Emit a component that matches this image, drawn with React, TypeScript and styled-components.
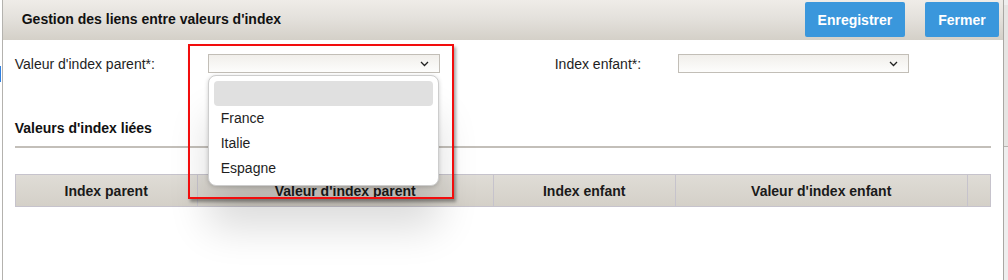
import styled, { createGlobalStyle } from 'styled-components'
import { FC } from 'react'

const GlobalStyle = createGlobalStyle`
	html, body {
		margin: 0;
		padding: 0;
		background: #ffffff;
		font-family: 'Liberation Sans', Arial, sans-serif;
	}
	* {
		box-sizing: border-box;
	}
`

const countries = ['France', 'Italie', 'Espagne']

const columns = [
	{ title: 'Index parent', width: 182 },
	{ title: "Valeur d'index parent", width: 296 },
	{ title: 'Index enfant', width: 182 },
	{ title: "Valeur d'index enfant", width: 292 },
	{ title: '', width: 22 },
]

const Chevron: FC = () => (
	<ChevronSvg width="9" height="6" viewBox="0 0 9 6">
		<polyline
			points="1,1 4.5,4.5 8,1"
			fill="none"
			stroke="#222"
			strokeWidth="1.3"
		/>
	</ChevronSvg>
)

export default function App() {
	return (
		<>
			<GlobalStyle />
			<Frame>
				<LeftEdge>
					<BlueMark />
				</LeftEdge>

				<Main>
					<Header>
						<Title>Gestion des liens entre valeurs d'index</Title>
						<Actions>
							<Button type="button">Enregistrer</Button>
							<Button type="button">Fermer</Button>
						</Actions>
					</Header>

					<Content>
						<FormRow>
							<Field>
								<Label $width={193}>Valeur d'index parent*:</Label>
								<SelectWrap>
									<Select $width={232}>
										<Chevron />
									</Select>

									{/* open list of the parent select */}
									<Highlight />
									<Dropdown>
										<EmptyOption />
										{countries.map(country => (
											<Option key={country}>{country}</Option>
										))}
									</Dropdown>
								</SelectWrap>
							</Field>

							<Field $offset={115}>
								<Label $width={123}>Index enfant*:</Label>
								<Select $width={231}>
									<Chevron />
								</Select>
							</Field>
						</FormRow>

						<SectionTitle>Valeurs d'index liées</SectionTitle>
						<Divider />

						<Table>
							<HeaderRow>
								{columns.map((col, i) => (
									<HeadCell key={i} $width={col.width}>
										{col.title}
									</HeadCell>
								))}
							</HeaderRow>
						</Table>
					</Content>
				</Main>

				<Scrollbar>
					<ScrollThumb />
				</Scrollbar>
			</Frame>
		</>
	)
}

const Frame = styled.div`
	display: flex;
	width: 1008px;
	height: 280px;
	overflow: hidden;
	background: #ffffff;
`

const LeftEdge = styled.div`
	position: relative;
	width: 3px;
	border-right: 1px solid #b4b2ae;
	background: #ffffff;
`

const BlueMark = styled.div`
	position: absolute;
	left: 0;
	top: 66px;
	width: 1px;
	height: 16px;
	background: #2f7fe0;
`

const Main = styled.div`
	flex: 1;
	display: flex;
	flex-direction: column;
`

const Header = styled.header`
	height: 40px;
	display: flex;
	justify-content: space-between;
	align-items: flex-start;
	padding: 0 4px 0 19px;
	background: linear-gradient(#efece8, #e4e1dc 45%, #d4d0c8);
`

const Title = styled.span`
	margin-top: 11px;
	font-size: 14px;
	font-weight: 700;
	color: #111111;
`

const Actions = styled.div`
	display: flex;
	gap: 20px;
	margin-top: 2px;
`

const Button = styled.button`
	height: 35px;
	padding: 0 13px;
	border: none;
	border-radius: 2px;
	background: #3a97dc;
	color: #ffffff;
	font-family: 'Liberation Sans', Arial, sans-serif;
	font-size: 14px;
	font-weight: 700;
	cursor: pointer;
`

const Content = styled.div`
	flex: 1;
	padding: 14px 12px 0 12px;
`

const FormRow = styled.div`
	display: flex;
	align-items: center;
	height: 19px;
`

const Field = styled.div<{ $offset?: number }>`
	display: flex;
	align-items: center;
	margin-left: ${({ $offset }) => $offset ?? 0}px;
`

const Label = styled.span<{ $width: number }>`
	width: ${({ $width }) => $width}px;
	font-size: 14px;
	color: #1e1e1e;
`

const SelectWrap = styled.div`
	position: relative;
`

const Select = styled.div<{ $width: number }>`
	width: ${({ $width }) => $width}px;
	height: 19px;
	display: flex;
	justify-content: flex-end;
	align-items: center;
	padding-right: 10px;
	border: 1px solid #c2beb7;
	background: linear-gradient(#f1efeb, #fdfdfc);
`

const ChevronSvg = styled.svg`
	display: block;
`

const Highlight = styled.div`
	position: absolute;
	left: -20px;
	top: -10px;
	width: 266px;
	height: 155px;
	border: 2px solid #f20d0d;
	box-shadow: 2px 3px 3px rgba(0, 0, 0, 0.35);
	pointer-events: none;
	z-index: 3;
`

const Dropdown = styled.div`
	position: absolute;
	left: 0;
	top: 21px;
	width: 231px;
	height: 111px;
	padding: 5px 5px 0 5px;
	border-radius: 8px;
	border: 1px solid #cdcdcd;
	background: #ffffff;
	box-shadow: 0 1px 4px rgba(0, 0, 0, 0.18), 0 42px 40px rgba(0, 0, 0, 0.14);
	z-index: 2;
`

const EmptyOption = styled.div`
	height: 25px;
	border-radius: 4px;
	background: #e0e0e0;
`

const Option = styled.div`
	height: 25px;
	line-height: 25px;
	padding-left: 7px;
	font-size: 14px;
	color: #1e1e1e;
`

const SectionTitle = styled.div`
	margin-top: 47px;
	font-size: 14px;
	font-weight: 700;
	color: #111111;
`

const Divider = styled.div`
	margin-top: 10px;
	height: 2px;
	background: #c3bfb9;
`

const Table = styled.div`
	margin-top: 26px;
	border: 1px solid #c6c3cc;
`

const HeaderRow = styled.div`
	display: flex;
	height: 31px;
	background: linear-gradient(#dfdcd6, #d4d0c8);
`

const HeadCell = styled.div<{ $width: number }>`
	width: ${({ $width }) => $width}px;
	display: flex;
	justify-content: center;
	align-items: center;
	font-size: 14px;
	font-weight: 700;
	color: #1a1a1a;
	border-right: 1px solid #c6c3cc;
	&:last-child {
		flex: 1;
		border-right: none;
	}
`

const Scrollbar = styled.div`
	width: 6px;
	border-left: 1px solid #a9a7a3;
	background: #eeeeee;
	display: flex;
	flex-direction: column;
`

const ScrollThumb = styled.div`
	margin-top: 5px;
	height: 142px;
	border-bottom: 1px solid #b5b3af;
	background: #e6e5e3;
`
